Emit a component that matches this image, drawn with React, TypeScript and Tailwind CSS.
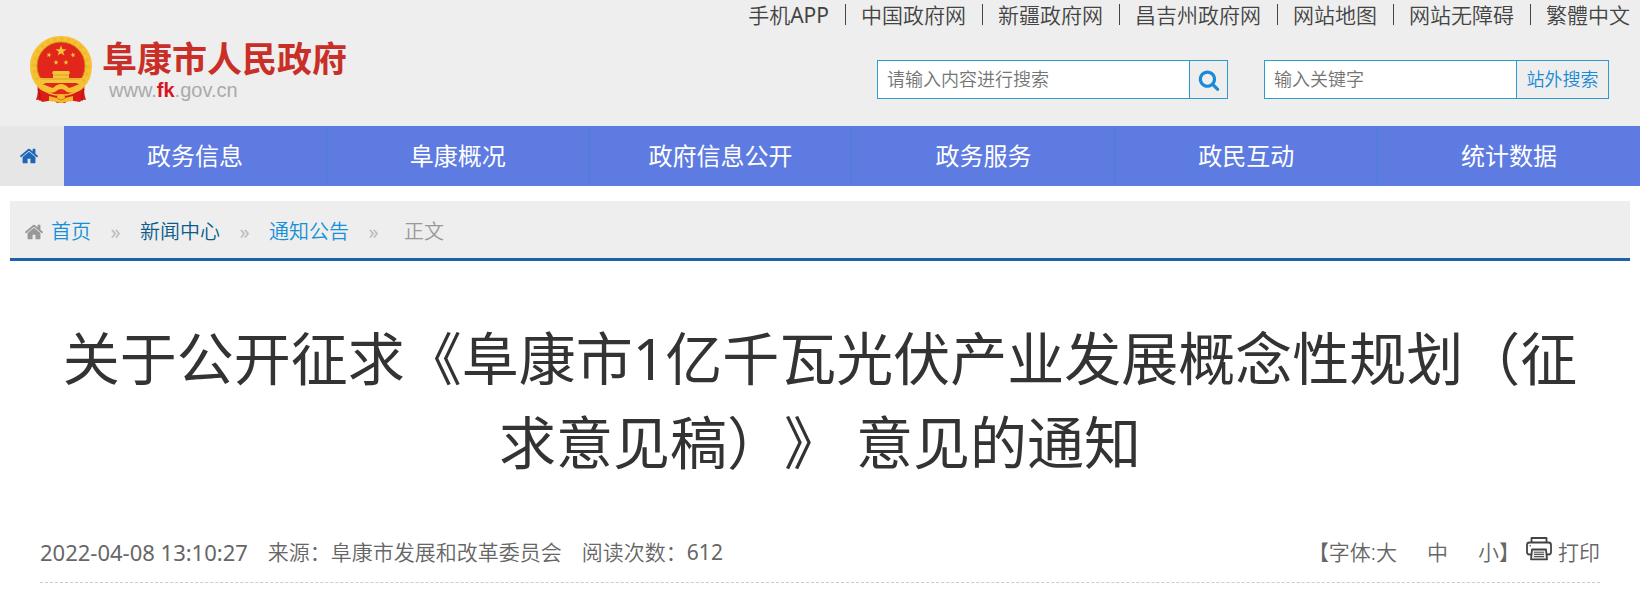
import React from "react";

const topLinks = ["中国政府网", "新疆政府网", "昌吉州政府网", "网站地图", "网站无障碍", "繁體中文"];

const navItems = ["政务信息", "阜康概况", "政府信息公开", "政务服务", "政民互动", "统计数据"];

function HomeIcon({ className }: { className: string }) {
    return (
        <svg viewBox="0 0 1792 1792" fill="currentColor" className={className} aria-hidden="true">
            <path d="M1472 992v480q0 26-19 45t-45 19h-384v-384h-256v384h-384q-26 0-45-19t-19-45v-480q0-1 .5-3t.5-3l575-474 575 474q1 2 1 6zm223-69l-62 74q-8 9-21 11h-3q-13 0-21-7l-692-577-692 577q-12 8-24 7-13-2-21-11l-62-74q-8-10-7-23.500t11-21.500l719-599q32-26 76-26t76 26l244 204v-195q0-14 9-23t23-9h192q14 0 23 9t9 23v408l219 182q10 8 11 21.500t-7 23.500z" />
        </svg>
    );
}

function SearchIcon() {
    return (
        <svg viewBox="0 0 1792 1792" fill="currentColor" className="size-[22px]" aria-hidden="true">
            <path d="M1216 832q0-185-131.500-316.500t-316.500-131.500-316.500 131.500-131.500 316.500 131.500 316.500 316.500 131.500 316.500-131.500 131.500-316.500zm512 832q0 52-38 90t-90 38q-54 0-90-38l-343-342q-179 124-399 124-143 0-273.500-55.500t-225-150-150-225-55.500-273.500 55.500-273.500 150-225 225-150 273.500-55.500 273.500 55.500 225 150 150 225 55.500 273.500q0 220-124 399l343 343q37 37 37 90z" />
        </svg>
    );
}

function PrinterIcon() {
    return (
        <svg viewBox="0 0 26 24" fill="none" stroke="#444" strokeWidth="1.800" strokeLinejoin="round" className="h-6 w-[26px]" aria-hidden="true">
            <path d="M5.500 5V1h15v4" />
            <path d="M5 17.500H3.500Q1 17.500 1 15V8Q1 5.500 3.500 5.500h19Q25 5.500 25 8v7q0 2.500-2.500 2.500H21" />
            <path d="M3.500 8.800h1.500" strokeWidth="1" />
            <path d="M6 12.500h14l1 9.800H5z" fill="#eee" />
            <path d="M8 15.200h10M8 17.400h10M8 19.600h10" stroke="#555" strokeWidth="1.100" />
        </svg>
    );
}

function Emblem() {
    const star = "M0-5 1.200-1.600 4.800-1.500 1.900.6 2.900 4 0 2-2.900 4-1.900.6-4.800-1.500-1.200-1.600z";
    return (
        <svg viewBox="0 0 62 68" className="h-[68px] w-[62px]" aria-hidden="true">
            <path d="M7 47Q9 56 6 64q5-1 6 2l12-2 3 3h8l3-3 12 2q1-3 6-2-3-8-1-17z" fill="#da1c18" />
            <path d="M31 0C48 0 62 13 62 30q0 13-8 21-10 9-23 9T8 51Q0 43 0 30C0 13 14 0 31 0z" fill="#f6c132" />
            <circle cx="31" cy="30" r="27" fill="none" stroke="#e5a524" strokeWidth="3" strokeDasharray="3 4" opacity=".35" />
            <circle cx="31" cy="30" r="24" fill="#e3261b" stroke="#c98b1a" />
            <g fill="#f3c63a">
                <path d={star} transform="translate(31 15) scale(1.150)" />
                <path d={star} transform="translate(19 19) rotate(15) scale(.55)" />
                <path d={star} transform="translate(43 19) rotate(-15) scale(.55)" />
                <path d={star} transform="translate(26 26.500) scale(.55)" />
                <path d={star} transform="translate(36 26.500) scale(.55)" />
                <path d="M23 35h16l1 3h-1v4h13l-2 5H12l-2-5h13v-4h-1z" />
            </g>
            <path d="M23 39h16M12 43h38" stroke="#d4861b" strokeWidth=".6" />
            <path d="M9 48h44l-6 7q-16 7-32 0z" fill="#e3261b" />
            <path d="M8 46q9 4 15 6 4-4 8-4t8 4q6-2 15-6 2 4-3 8-8 4-14 2-3-3-6-3t-6 3q-6 2-14-2-5-4-3-8z" fill="#f6c132" />
            <path d="M19 60l8 2q0-4 4-4t4 4l8-2v5l-8 1q-4 2-8 0l-8-1z" fill="#f4b92b" />
            <path d="M27 62q4 4 8 0" fill="none" stroke="#cc7d18" />
            <path d="M8 53q3 6 2 12M54 53q-3 6-2 12" fill="none" stroke="#a91512" />
        </svg>
    );
}

function Header() {
    return (
        <header className="h-[126px] bg-[#eee]">
            <nav className="flex justify-end pr-[10px] text-[21px] leading-[30px] text-[#444]">
                <a href="#">
                    手机<span className="font-normal">APP</span>
                </a>
                {topLinks.map((label) => (
                    <React.Fragment key={label}>
                        <span className="mt-1 mr-[15px] ml-4 h-[21px] w-px bg-[#444]" />
                        <a href="#">{label}</a>
                    </React.Fragment>
                ))}
            </nav>

            <div className="flex justify-between pr-[31px] pl-[30px]">
                <a href="#" className="mt-[6px] flex gap-[10px]">
                    <Emblem />
                    <span className="flex flex-col">
                        <span className="text-[35px] leading-[46px] font-bold text-[#c92f27]">阜康市人民政府</span>
                        <span className="ml-[7px] font-['Liberation_Sans',sans-serif] text-[20px] leading-[16px] text-[#aaa]">
                            www.<b className="text-[#d7151f]">fk</b>.gov.cn
                        </span>
                    </span>
                </a>

                <div className="mt-[30px] flex gap-9 text-[18px]">
                    <form className="flex h-[39px]">
                        <input
                            type="text"
                            aria-label="搜索"
                            placeholder="请输入内容进行搜索"
                            className="w-[313px] border border-[#2d9bcd] bg-white px-[9px] placeholder:text-[#757575]"
                        />
                        <button
                            type="button"
                            aria-label="搜索"
                            className="flex w-[38px] items-center justify-center border border-l-0 border-[#2d9bcd] text-[#1a8ad6]"
                        >
                            <SearchIcon />
                        </button>
                    </form>
                    <form className="flex h-[39px]">
                        <input
                            type="text"
                            aria-label="关键字"
                            placeholder="输入关键字"
                            className="w-[253px] border border-[#2d9bcd] bg-white px-[9px] placeholder:text-[#757575]"
                        />
                        <button type="button" className="w-[92px] border border-l-0 border-[#2d9bcd] text-[#1a8ad6]">
                            站外搜索
                        </button>
                    </form>
                </div>
            </div>
        </header>
    );
}

function MainNav() {
    return (
        <nav className="flex h-[60px] bg-[#5e7be1] font-normal">
            <a href="#" aria-label="首页" className="flex w-16 items-center justify-center bg-[#e6e6e6] pr-[6px] text-[#1e66b8]">
                <HomeIcon className="size-5" />
            </a>
            {navItems.map((label) => (
                <a
                    key={label}
                    href="#"
                    className="flex-1 border-r border-[#4a80d2] text-center text-[24px] leading-[60px] text-white last:border-r-0"
                >
                    {label}
                </a>
            ))}
        </nav>
    );
}

function Breadcrumb() {
    return (
        <nav className="mx-[10px] mt-[15px] flex h-[60px] items-center border-b-[3px] border-[#1e60aa] bg-[#eee] pt-1 pl-[14px] text-[20px] text-[#1490d8]">
            <HomeIcon className="mr-[7px] size-5 text-[#999]" />
            <a href="#">首页</a>
            <span className="w-[49px] text-center font-normal text-[#bbb]">»</span>
            <a href="#" className="text-[#0a5c8c]">新闻中心</a>
            <span className="w-[49px] text-center font-normal text-[#bbb]">»</span>
            <a href="#">通知公告</a>
            <span className="mr-[6px] w-[49px] text-center font-normal text-[#bbb]">»</span>
            <span className="text-[#999]">正文</span>
        </nav>
    );
}

export default function App() {
    return (
        <div className="bg-white font-['Noto_Sans','Noto_Sans_CJK_SC',sans-serif] font-[350] [text-spacing-trim:space-all]" lang="zh-CN">
            <Header />
            <MainNav />
            <Breadcrumb />
            <main className="px-10">
                <h1 className="mt-[55px] text-center text-[57px] leading-[84px] font-normal text-[#333]">
                    关于公开征求《阜康市1亿千瓦光伏产业发展概念性规划（征求意见稿）》 意见的通知
                </h1>
                <div className="mt-[53px] flex items-center justify-between border-b border-dashed border-[#ccc] pb-[15px] text-[21px] leading-[30px] text-[#666]">
                    <div className="flex gap-5">
                        <time className="text-[22px] font-normal">2022-04-08 13:10:27</time>
                        <span>来源：阜康市发展和改革委员会</span>
                        <span>
                            阅读次数：<span className="font-normal">612</span>
                        </span>
                    </div>
                    <div className="flex items-center">
                        <span>【字体:</span>
                        <button type="button">大</button>
                        <button type="button" className="mx-[30px]">中</button>
                        <button type="button">小</button>
                        <span className="mr-[6px]">】</span>
                        <button type="button" className="flex items-start gap-[6px]">
                            <PrinterIcon />
                            打印
                        </button>
                    </div>
                </div>
            </main>
        </div>
    );
}
